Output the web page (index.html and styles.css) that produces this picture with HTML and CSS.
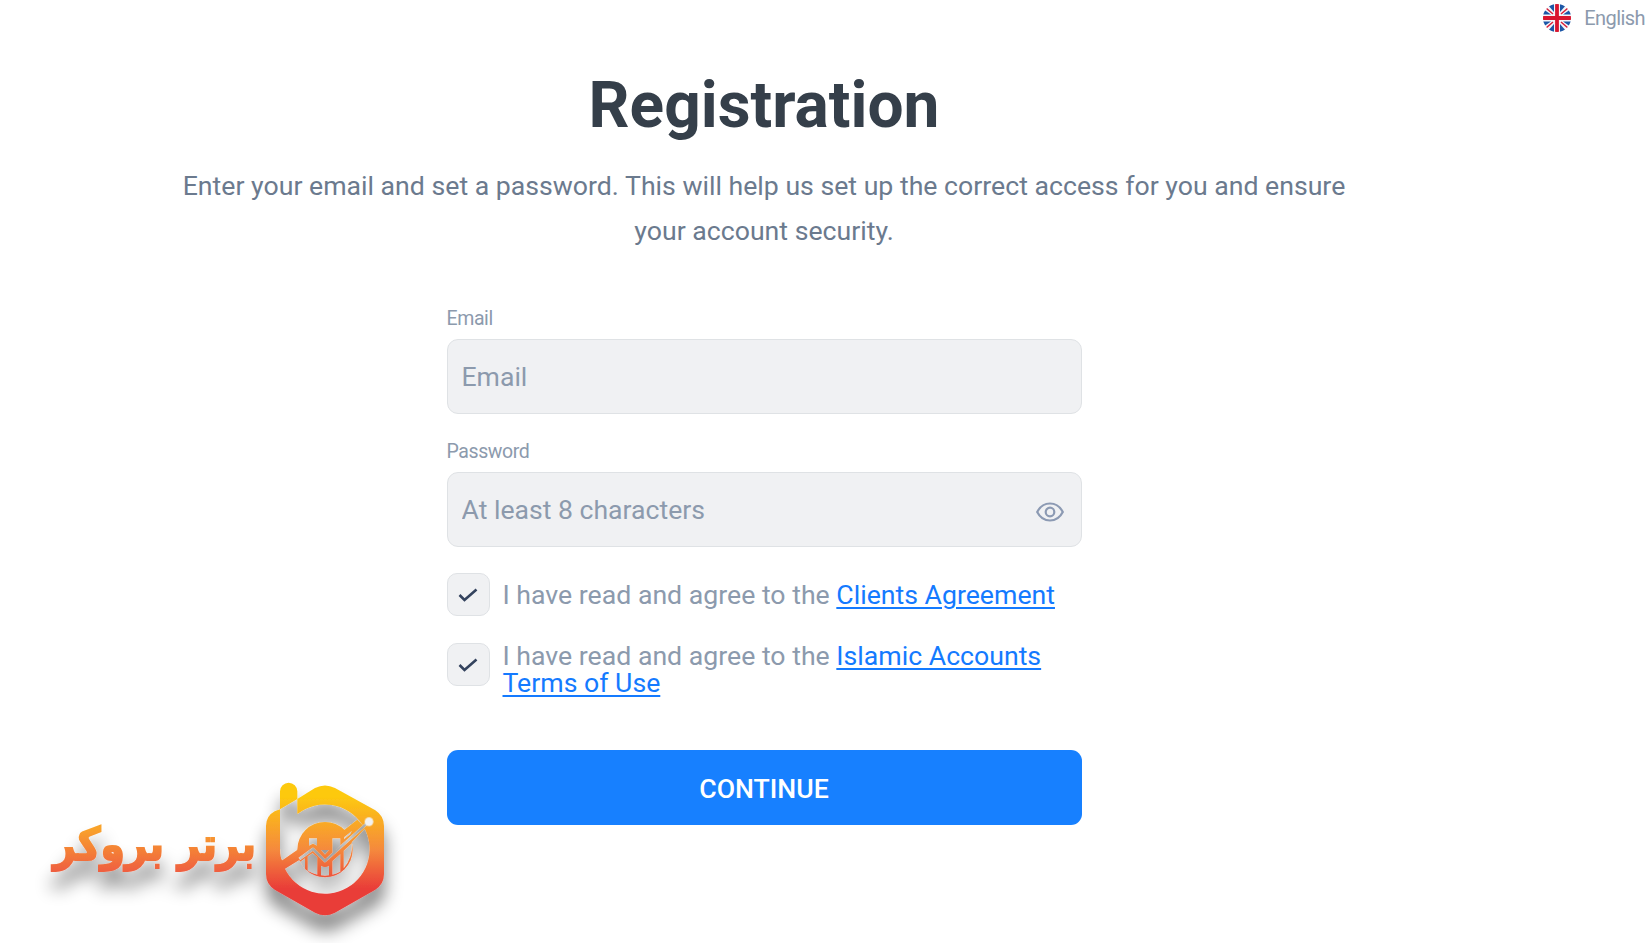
FILE: index.html
```html
<!doctype html>
<html lang="en">
  <head>
    <meta charset="utf-8">
    <title>Registration</title>
    <link rel="stylesheet" href="styles.css">
  </head>
  <body>
    <header class="topbar">
      <a class="language" href="#">
        <svg class="flag" viewBox="0 0 28 28">
          <clipPath id="flag-clip"><circle cx="14" cy="14" r="14"/></clipPath>
          <g clip-path="url(#flag-clip)">
            <path fill="#f4f5f8" d="M0 0h28v28H0z"/>
            <path fill="#1c57a7" d="M0 10.500V5l8 5.500zM4 0h7v8zM24 0h-7v8zM28 10.500V5l-8 5.500zM0 17.500V23l8-5.500zM4 28h7v-8zM24 28h-7v-8zM28 17.500V23l-8-5.500z"/>
            <path stroke="#d8203a" stroke-width="1.500" d="M3 4l7 6M25 4l-7 6M3 24l7-6M25 24l-7-6"/>
            <path stroke="#d8152f" stroke-width="3.800" d="M14 0v28M0 14h28"/>
          </g>
        </svg>
        <span>English</span>
      </a>
    </header>
    <main class="registration">
      <h1>Registration</h1>
      <p class="intro">Enter your email and set a password. This will help us set up the correct access for you and ensure<br>your account security.</p>
      <form class="form">
        <label class="label" for="email">Email</label>
        <div class="field">
          <input type="email" id="email" placeholder="Email">
        </div>
        <label class="label" for="password">Password</label>
        <div class="field">
          <input type="password" id="password" placeholder="At least 8 characters">
          <svg class="eye" viewBox="0 0 28 20" fill="none" stroke="#8c9ab3" stroke-width="2.200">
            <path d="M1.200 10C4 4.500 8.500 1.500 14 1.500S24 4.500 26.800 10C24 15.500 19.500 18.500 14 18.500S4 15.500 1.200 10z"/>
            <circle cx="14" cy="10" r="4.300"/>
          </svg>
        </div>
        <div class="agree">
          <span class="checkbox"><svg viewBox="0 0 20 14"><path d="M1.500 7l5 5L18.500 1.500"/></svg></span>
          <span class="agree-text">I have read and agree to the <a href="#">Clients Agreement</a></span>
        </div>
        <div class="agree">
          <span class="checkbox"><svg viewBox="0 0 20 14"><path d="M1.500 7l5 5L18.500 1.500"/></svg></span>
          <span class="agree-text two-lines">I have read and agree to the <a href="#">Islamic Accounts<br>Terms of Use</a></span>
        </div>
        <button class="continue" type="button">CONTINUE</button>
      </form>
    </main>

    <svg class="brand" viewBox="0 0 1140 519">
      <defs>
        <linearGradient id="hex-fill" gradientUnits="userSpaceOnUse" x1="0" y1="40" x2="0" y2="435">
          <stop offset="0.1" stop-color="#fdc90f"/>
          <stop offset="0.5" stop-color="#f58a3c"/>
          <stop offset="0.8" stop-color="#e93d39"/>
        </linearGradient>
        <linearGradient id="text-fill" gradientUnits="userSpaceOnUse" x1="0" y1="175" x2="0" y2="300">
          <stop offset="0" stop-color="#f9a32b"/>
          <stop offset="1" stop-color="#ef6140"/>
        </linearGradient>
        <filter id="brand-shadow" filterUnits="userSpaceOnUse" x="0" y="0" width="1140" height="519">
          <feDropShadow dx="2" dy="48" stdDeviation="25" flood-color="#000" flood-opacity="0.48"/>
        </filter>
        <mask id="hex-mask" maskUnits="userSpaceOnUse" x="0" y="0" width="480" height="519">
          <path fill="#fff" d="M0 0h480v519H0z"/>
          <!-- ring and stem -->
          <path fill="#000" d="M90 118L142 87V132A134 134 0 1 1 104 295L97 272Q90 265 90 235z"/>
          <circle cx="225" cy="239" r="83" fill="#fff"/>
          <!-- trend arm -->
          <path fill="#fff" d="M85 279L147 236L188 245L104 297L80 300zM275 186L322 149L346 174L300 222z"/>
          <path fill="#000" d="M177 205h24v22l-12-6-12 6zM213 240h24l-12 14zM247 205h24v24l-24 22z"/>
          <path fill="#000" d="M150 275l15-10v32q-10-9-15-22zM173 259l15-10 14 13v52q-16-4-29-12zM213 287q12 8 24 0v29q-12 2-24 0zM247 273l24-21v53q-11 6-24 9zM281 242l25-23q3 43-25 76zM282 202l24-20-5 11-19 15z"/>
          <path fill="none" stroke="#000" stroke-width="9" stroke-linejoin="round" d="M148 267L189 237L225 273L357 155"/>
        </mask>
      </defs>
      <g filter="url(#brand-shadow)">
        <text class="brand-name" x="374" y="269" text-anchor="middle" direction="rtl" textLength="608" lengthAdjust="spacingAndGlyphs" fill="url(#text-fill)" stroke="url(#text-fill)" stroke-width="6">برتر بروکر</text>
        <g transform="translate(660 0)">
          <g mask="url(#hex-mask)" fill="url(#hex-fill)">
            <path d="M90 118V64a26 26 0 0 1 52 0V87L195 54Q225 39 255 54L376 121Q402 138 402 168V312Q402 342 376 359L255 428Q225 443 195 428L74 359Q48 342 48 312V168Q48 138 74 124z"/>
          </g>
        </g>
      </g>
      <circle cx="1017" cy="155" r="13" fill="#f2f2f2"/>
    </svg>
  </body>
</html>
```

FILE: styles.css
```css
* {
  box-sizing: border-box;
}
body {
  margin: 0;
  background: #fff;
  font-family: Roboto, Arial, sans-serif;
  color: #8c9aad;
  overflow: hidden;
}
.topbar {
  display: flex;
  justify-content: flex-end;
  height: 36px;
  padding-right: 5px;
}
.language {
  display: flex;
  align-items: center;
  gap: 13px;
  font-size: 20px;
  letter-spacing: -0.55px;
  color: #8c9aad;
  text-decoration: none;
}
.flag {
  width: 28px;
  height: 28px;
}
.registration {
  display: flex;
  flex-direction: column;
  align-items: center;
  width: 1528px;
}
h1 {
  margin: 32px 0 0;
  font-size: 64px;
  line-height: 76px;
  font-weight: 700;
  color: #353f4a;
}
.intro {
  margin: 20px 0 0;
  font-size: 26.66px;
  line-height: 45px;
  text-align: center;
  white-space: nowrap;
  color: #6b7a8e;
}
.form {
  display: flex;
  flex-direction: column;
  width: 635px;
  margin-top: 53px;
}
.label {
  height: 32px;
  font-size: 19.5px;
  line-height: 24px;
  letter-spacing: -0.4px;
}
.field {
  display: flex;
  align-items: center;
  height: 75px;
  margin-bottom: 26px;
  padding: 0 17px 0 14px;
  background: #f0f1f3;
  border: 1px solid #dfe2e5;
  border-radius: 11px;
}
.field input {
  flex: 1;
  padding: 0;
  border: 0;
  outline: 0;
  background: none;
  font: 26.6px Roboto, Arial, sans-serif;
}
.field input::placeholder {
  color: #8c9aad;
}
.eye {
  width: 28px;
  height: 20px;
  margin-top: 4px;
}
.agree {
  display: flex;
  align-items: center;
  gap: 13px;
  height: 43px;
  margin-bottom: 27px;
}
.checkbox {
  display: flex;
  align-items: center;
  justify-content: center;
  width: 43px;
  height: 43px;
  background: #f0f1f3;
  border: 1px solid #dfe2e5;
  border-radius: 10px;
}
.checkbox svg {
  width: 20px;
  height: 14px;
  fill: none;
  stroke: #34435e;
  stroke-width: 2.6;
}
.agree-text {
  padding-top: 2px;
  font-size: 26.66px;
  line-height: 27px;
  white-space: nowrap;
}
.two-lines {
  padding-top: 10px;
}
.agree-text a {
  color: #147aff;
  text-decoration-thickness: 2px;
  text-underline-offset: 3px;
}
.continue {
  height: 75px;
  margin-top: 37px;
  padding-top: 3px;
  border: 0;
  border-radius: 11px;
  background: #1780ff;
  color: #fff;
  font: 500 26.66px Roboto, Arial, sans-serif;
}
.brand {
  position: fixed;
  left: 30px;
  top: 770px;
  width: 380px;
  height: 173px;
}
.brand-name {
  font-family: "DejaVu Sans", sans-serif;
  font-size: 136px;
  font-weight: 700;
}
```
